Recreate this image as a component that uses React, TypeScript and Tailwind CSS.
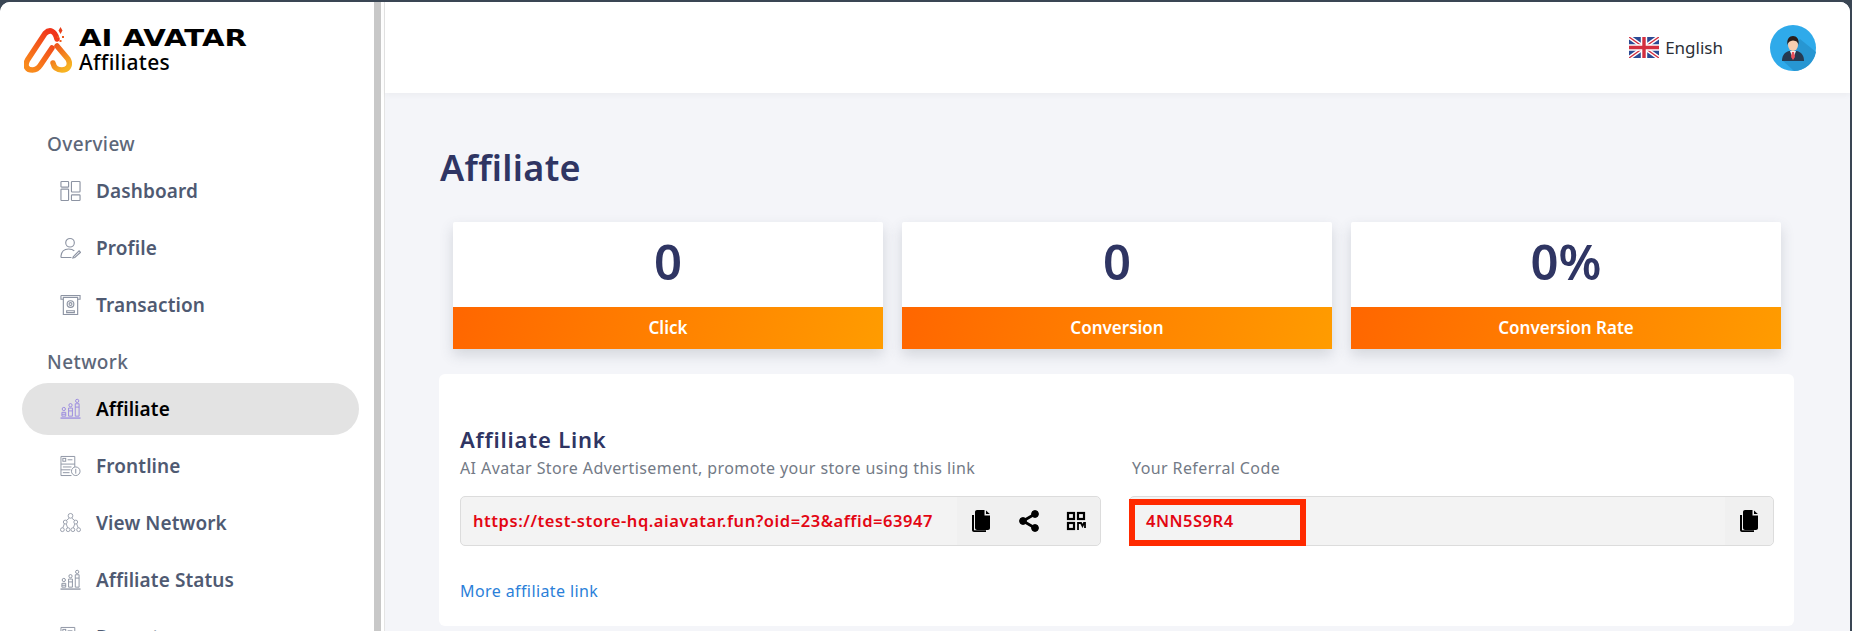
const gray = '#8d94a3';

function Logo() {
  return (
    <svg width="48" height="46" viewBox="0 0 48 46" fill="none">
      <defs>
        <linearGradient id="logoA" x1="0.8" y1="0" x2="0.2" y2="1">
          <stop offset="0" stopColor="#f0341a" />
          <stop offset="1" stopColor="#f98a1c" />
        </linearGradient>
        <linearGradient id="logoB" x1="0.2" y1="0" x2="0.7" y2="1">
          <stop offset="0" stopColor="#ef5a1c" />
          <stop offset="1" stopColor="#f7b322" />
        </linearGradient>
      </defs>
      <path d="M33 12C31 4 26 1.500 21 6.500L3.500 33C0 39.500 3.500 43 8.500 43C12.500 43 14.500 41 16.500 38L28 21" stroke="url(#logoA)" strokeWidth="5.500" strokeLinecap="round" />
      <path d="M33 19L44 32C47.500 38.500 43.500 43 38 43C33 43 30 40.500 29 36" stroke="url(#logoB)" strokeWidth="5.500" strokeLinecap="round" />
      <path d="M36.500 0l2 3.500-2 3.500-2-3.500z" fill="#e8401c" />
      <path d="M33 9h2v2h-2zM38 9h2v2h-2zM35.500 13h2v2h-2z" fill="#ee5a1c" />
    </svg>
  );
}

function DashboardIcon() {
  return (
    <svg width="22" height="22" viewBox="0 0 22 22" fill="none" stroke={gray} strokeWidth="1.200">
      <rect x="1" y="1" width="8" height="6" rx="0.800" />
      <rect x="1" y="9" width="8" height="12" rx="0.800" />
      <rect x="12" y="1" width="9" height="11" rx="0.800" />
      <rect x="12" y="15" width="9" height="6" rx="0.800" />
    </svg>
  );
}

function ProfileIcon() {
  return (
    <svg width="22" height="22" viewBox="0 0 22 22" fill="none" stroke={gray} strokeWidth="1.200">
      <circle cx="10.500" cy="5.500" r="4.500" />
      <path d="M1 21c0-6 3-9 8-9 3 0 5 1 6 2M1 21h11" />
      <path d="M14 20l6-6 1.500 1.500-6 5.500-2 .5z" />
    </svg>
  );
}

function TransactionIcon() {
  return (
    <svg width="22" height="22" viewBox="0 0 22 22" fill="none" stroke={gray} strokeWidth="1.200">
      <path d="M1 1h20v4h-2.500M1 1v4h2.500" />
      <path d="M3.500 3v18h15V3z" />
      <circle cx="11" cy="10" r="3.500" />
      <circle cx="11" cy="10" r="1.500" />
      <path d="M7 17h8v2H7z" />
    </svg>
  );
}

function BarsIcon({ color = gray }: { color?: string }) {
  return (
    <svg width="22" height="22" viewBox="0 0 22 22" fill="none" stroke={color} strokeWidth="1">
      <path d="M0.500 20.500h21" strokeWidth="1.400" />
      <circle cx="4" cy="11" r="1.700" />
      <path d="M2 18.500v-4h4v4zM2 16.500h4" />
      <circle cx="11" cy="7" r="1.700" />
      <path d="M9 18.500v-8.500h4v8.500zM9 13h4" />
      <circle cx="18" cy="2.500" r="1.700" />
      <path d="M16 18.500v-13h4v13zM16 9h4" />
    </svg>
  );
}

function FrontlineIcon() {
  return (
    <svg width="22" height="22" viewBox="0 0 22 22" fill="none" stroke={gray} strokeWidth="1">
      <path d="M15.500 12V1H1v20h11" />
      <rect x="3" y="3" width="3" height="3" />
      <path d="M8 4.500h5M1 9h14.500M3 12h9M1 15h10M3 18h7" />
      <circle cx="16.500" cy="16.500" r="4.500" />
      <path d="M16.500 14v5" />
    </svg>
  );
}

function NetworkIcon() {
  return (
    <svg width="22" height="22" viewBox="0 0 22 22" fill="none" stroke={gray} strokeWidth="0.900">
      <circle cx="11" cy="3.500" r="2.500" />
      <circle cx="5.500" cy="10" r="2" />
      <circle cx="16.500" cy="10" r="2" />
      <circle cx="2.500" cy="18" r="2" />
      <circle cx="8.500" cy="18" r="2" />
      <circle cx="13.500" cy="18" r="2" />
      <circle cx="19.500" cy="18" r="2" />
      <path d="M9.500 6L6.500 8.500M12.500 6l3 2.500M4.500 12L3 16M6.500 12l1.500 4M15.500 12L14 16M17.500 12l1.500 4" />
    </svg>
  );
}

function CopyIcon() {
  return (
    <svg width="24" height="24" viewBox="0 0 24 24" fill="currentColor">
      <path d="M3 6v15c0 1.100.9 2 2 2h12v-1.800H5V6z" />
      <path d="M8 1h7.500v5.500H21V19c0 1.100-.9 2-2 2H8c-1.100 0-2-.9-2-2V3c0-1.100.9-2 2-2z" />
      <path d="M17 1.500l3.800 3.500H17z" />
    </svg>
  );
}

function ShareIcon() {
  return (
    <svg width="24" height="24" viewBox="0 0 24 24" fill="currentColor" stroke="currentColor">
      <path d="M18 5L6 12l12 7" fill="none" strokeWidth="2.800" />
      <circle cx="18" cy="5" r="3.400" />
      <circle cx="6" cy="12" r="3.400" />
      <circle cx="18" cy="19" r="3.400" />
    </svg>
  );
}

function QrIcon() {
  return (
    <svg width="24" height="24" viewBox="0 0 24 24" fill="none" stroke="currentColor" strokeWidth="2.200">
      <rect x="4" y="4" width="6" height="6" />
      <rect x="14" y="4" width="6" height="6" />
      <rect x="4" y="14" width="6" height="6" />
      <path d="M14 21v-7h3l1.500 3 1.500-3h1v5" strokeWidth="1.800" />
    </svg>
  );
}

function UkFlag() {
  return (
    <svg width="30" height="21" viewBox="0 0 28 20" preserveAspectRatio="none">
      <rect width="28" height="20" fill="#2b4a94" />
      <path d="M0 0L28 20M28 0L0 20" stroke="#fff" strokeWidth="4" />
      <path d="M0 0L28 20M28 0L0 20" stroke="#d32f3f" strokeWidth="1.300" />
      <path d="M14 0v20M0 10h28" stroke="#fff" strokeWidth="6" />
      <path d="M14 0v20M0 10h28" stroke="#d32f3f" strokeWidth="3.200" />
    </svg>
  );
}

function Avatar() {
  return (
    <svg width="46" height="46" viewBox="0 0 46 46">
      <circle cx="23" cy="23" r="23" fill="#2faaea" />
      <path d="M12 35L30 14 46 27A23 23 0 0 1 24 46z" fill="#2796d2" />
      <path d="M12 36c0-6 3-9 7-10h8c4 1 7 4 7 10z" fill="#253a52" />
      <path d="M20 26h6l-3 8z" fill="#f3f3f3" />
      <path d="M22 27h2l1 5-2 3-2-3z" fill="#e8505b" />
      <ellipse cx="23" cy="20" rx="5" ry="6" fill="#f6cdb0" />
      <path d="M17.500 20c-1-6 2-9 5.500-9s6.500 3 5.500 9c-.5-3-2-4-5.500-4.500-3 .5-5 1.500-5.500 4.500z" fill="#2b1d1a" />
    </svg>
  );
}

function Section({ children }: { children: string }) {
  return <div className="pl-[47px] h-[24px] leading-[24px] text-[19px] font-medium text-[#5d6779] tracking-[0.4px]">{children}</div>;
}

function NavItem({ icon, label, active }: { icon: React.ReactNode; label: string; active?: boolean }) {
  return (
    <div className={`mx-[22px] w-[337px] h-[52px] shrink-0 rounded-full flex items-center pl-[38px] gap-[15px] text-[19px] font-semibold tracking-[0.1px] ${active ? 'bg-[#e3e3e3] text-black' : 'text-[#4f5a72]'}`}>
      <span className="w-[21px] flex justify-center">{icon}</span>
      {label}
    </div>
  );
}

function Stat({ value, label }: { value: string; label: string }) {
  return (
    <div className="shadow-[0_6px_14px_rgba(60,70,90,0.18)] rounded-t-[2px] overflow-hidden">
      <div className="h-[85px] pb-[6px] bg-white flex items-center justify-center text-[49px] font-semibold text-[#2f3563]">{value}</div>
      <div className="h-[42px] bg-linear-[105deg,#ff6600,#ff9c00] flex items-center justify-center text-[17px] font-semibold text-white">{label}</div>
    </div>
  );
}

export default function App() {
  return (
    <div className="h-[631px] w-full overflow-hidden bg-[#3a4654] pt-[2px] pr-[2px] font-['Noto_Sans',sans-serif]">
      <div className="h-[629px] flex rounded-t-[10px] overflow-hidden bg-white">
        {/* Sidebar */}
        <aside className="w-[374px] shrink-0 bg-white overflow-hidden">
          <div className="h-[90px] pl-[24px] pt-[25px] flex gap-[7px]">
            <Logo />
            <div>
              <div className="font-['DejaVu_Sans',sans-serif] font-bold text-[23px] leading-[22px] h-[22px] text-black scale-x-[1.27] origin-left whitespace-nowrap">AI AVATAR</div>
              <div className="text-[21px] leading-[24px] font-medium text-black tracking-[0.3px] mt-[1px]">Affiliates</div>
            </div>
          </div>
          <div className="pt-[40px] flex flex-col">
            <Section>Overview</Section>
            <div className="flex flex-col gap-[5px] mt-[9px] mb-[19px]">
              <NavItem icon={<DashboardIcon />} label="Dashboard" />
              <NavItem icon={<ProfileIcon />} label="Profile" />
              <NavItem icon={<TransactionIcon />} label="Transaction" />
            </div>
            <Section>Network</Section>
            <div className="flex flex-col gap-[5px] mt-[9px]">
              <NavItem icon={<BarsIcon color="#9a8be0" />} label="Affiliate" active />
              <NavItem icon={<FrontlineIcon />} label="Frontline" />
              <NavItem icon={<NetworkIcon />} label="View Network" />
              <NavItem icon={<BarsIcon />} label="Affiliate Status" />
              <NavItem icon={<FrontlineIcon />} label="Report" />
            </div>
          </div>
        </aside>
        <div className="w-[7px] shrink-0 bg-[#c8c8c8]" />
        <div className="w-[4px] shrink-0 bg-white border-r border-[#e4e4e4]" />

        {/* Main */}
        <main className="flex-1 min-w-0 bg-[#f4f5f9] flex flex-col">
          <header className="h-[91px] shrink-0 bg-white flex items-center justify-end shadow-[0_2px_6px_rgba(0,0,0,0.04)]">
            <div className="flex items-center gap-[6px] text-[17px] text-[#2b2f36] mr-[47px]">
              <UkFlag />
              English
            </div>
            <div className="mr-[34px]">
              <Avatar />
            </div>
          </header>

          <div className="pl-[55px] pr-[56px]">
            <h1 className="pt-[53px] h-[129px] text-[36px] leading-[44px] font-semibold text-[#2f3563] tracking-[0.3px]">Affiliate</h1>

            <div className="grid grid-cols-3 gap-[19px] ml-[13px] mr-[13px]">
              <Stat value="0" label="Click" />
              <Stat value="0" label="Conversion" />
              <Stat value="0%" label="Conversion Rate" />
            </div>

            <section className="mt-[25px] -ml-[1px] bg-white rounded-[6px] h-[252px] pl-[21px] pt-[51px]">
              <div className="grid grid-cols-[641px_645px] gap-[28px]">
                <div>
                  <h2 className="text-[22px] leading-[28px] font-semibold text-[#2f3563] tracking-[0.8px]">Affiliate Link</h2>
                  <p className="text-[16px] leading-[24px] mt-[3px] text-[#737a86] tracking-[0.4px] whitespace-nowrap">AI Avatar Store Advertisement, promote your store using this link</p>
                  <div className="mt-[16px] h-[50px] flex items-center rounded-[5px] border border-[#dcdcdc] bg-[#f3f3f3]">
                    <span className="flex-1 pl-[12px] text-[16.500px] font-semibold text-[#e30613] tracking-[0.55px] whitespace-nowrap">https://test-store-hq.aiavatar.fun?oid=23&amp;affid=63947</span>
                    <div className="w-[143px] h-full flex items-center bg-[#f0f0f0] rounded-r-[5px] text-black">
                      <span className="w-[48px] flex justify-center"><CopyIcon /></span>
                      <span className="w-[48px] flex justify-center"><ShareIcon /></span>
                      <span className="w-[48px] flex justify-center"><QrIcon /></span>
                    </div>
                  </div>
                  <a className="block mt-[33px] text-[16px] leading-[24px] text-[#2b7fd9] tracking-[0.4px]">More affiliate link</a>
                </div>
                <div>
                  <div className="h-[28px]" />
                  <p className="text-[16px] leading-[24px] mt-[3px] pl-[3px] text-[#737a86] tracking-[0.4px]">Your Referral Code</p>
                  <div className="relative mt-[16px] h-[50px] flex items-center rounded-[5px] border border-[#dcdcdc] bg-[#f3f3f3]">
                    <span className="flex-1 pl-[16px] text-[16.500px] font-semibold text-[#e30613] tracking-[0.5px]">4NN5S9R4</span>
                    <div className="w-[48px] h-full flex items-center justify-center bg-[#f0f0f0] rounded-r-[5px] text-black">
                      <CopyIcon />
                    </div>
                    <div className="absolute left-[-1px] top-[2px] w-[177px] h-[47px] border-[6px] border-[#ff2a00]" />
                  </div>
                </div>
              </div>
            </section>
          </div>
        </main>
      </div>
    </div>
  );
}
